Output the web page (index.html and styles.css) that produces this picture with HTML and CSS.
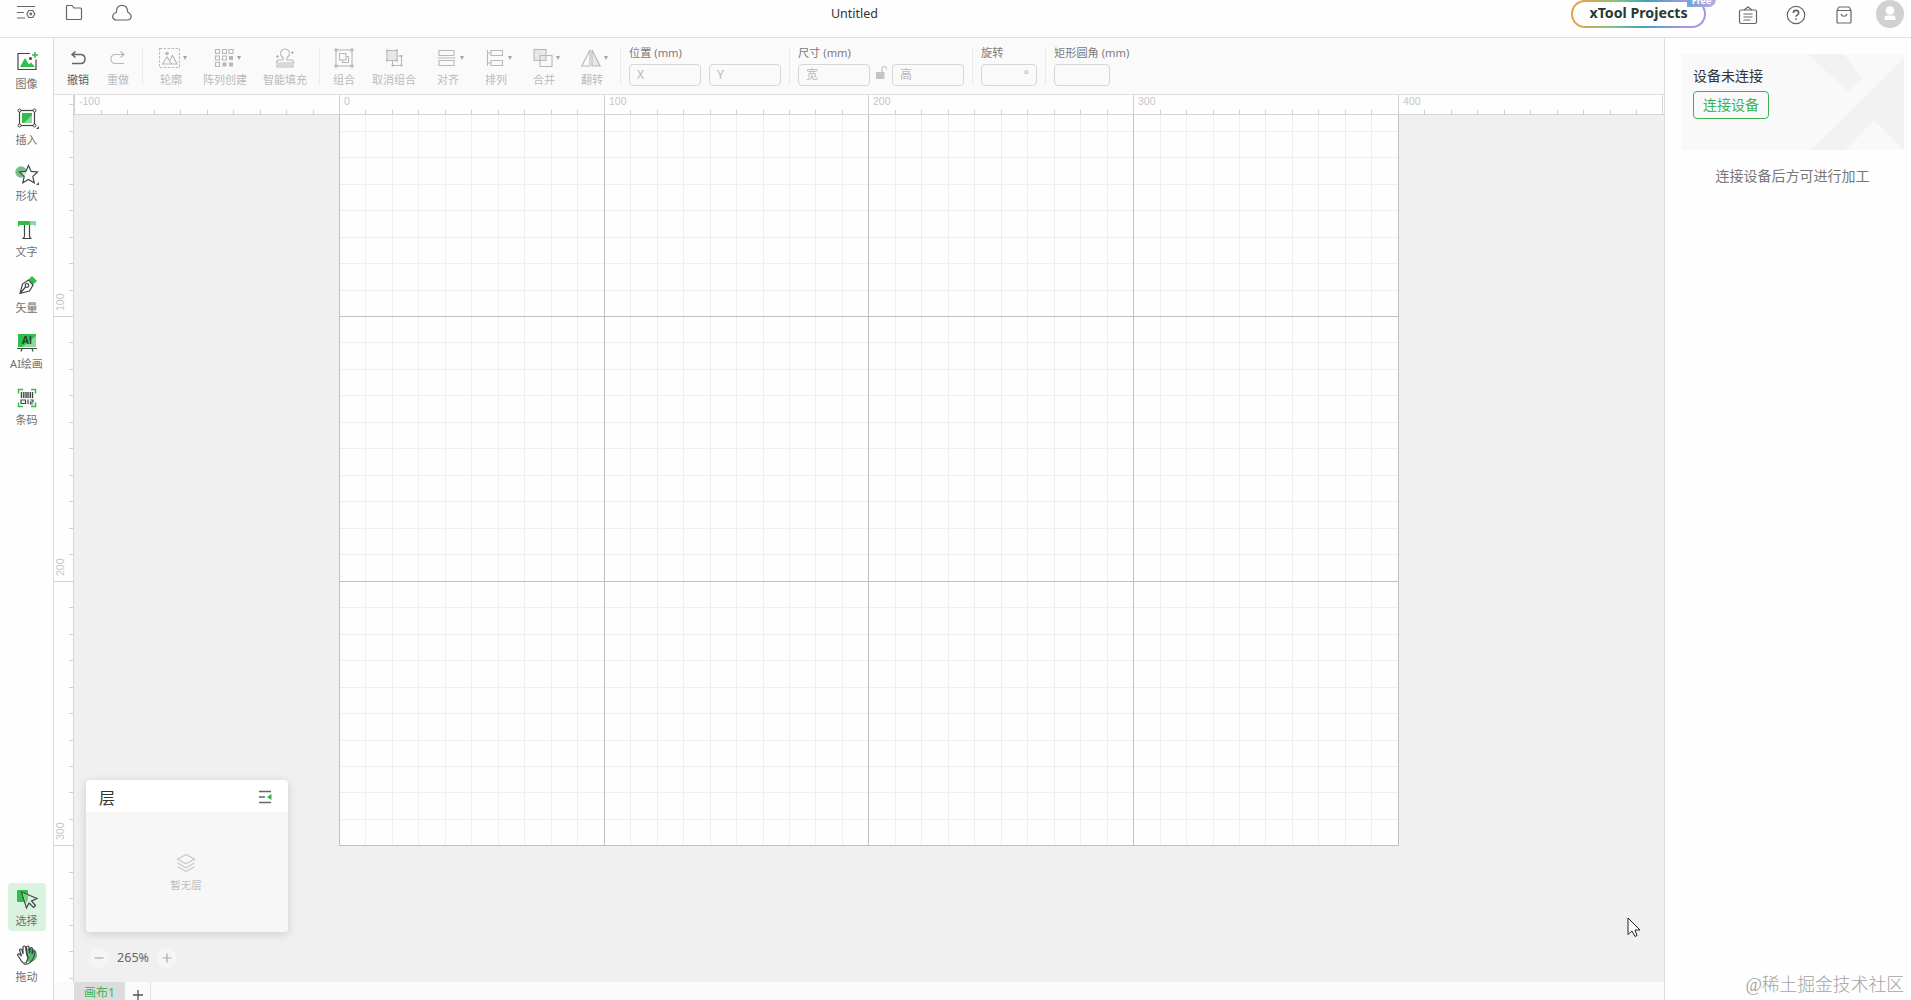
FILE: index.html
```html
<!DOCTYPE html>
<html lang="zh-CN">
    <head>
        <title>Untitled</title>
        <meta charset="utf-8">
        <link rel="stylesheet" href="styles.css">
    </head>
    <body>
        <!-- 顶部栏 -->
        <div class="header">
            <div class="header-left">
                <svg class="icon-menu" width="20" height="16" viewBox="0 0 20 16"><path d="M1 1.500h18M1 7.500h7M1 13h8"/><path d="M12.800 4.500h4l2 3.500-2 3.500h-4l-2-3.500z" transform="translate(0 1)"/><circle cx="14.800" cy="9" r=".8"/></svg>
                <svg class="icon-folder" width="18" height="18" viewBox="0 0 18 18"><path d="M2.500 1.500h4.500l2 2.500h6.500q1 0 1 1v9.500q0 1-1 1h-13q-1 0-1-1v-12q0-1 1-1z"/></svg>
                <svg class="icon-cloud" width="20" height="18" viewBox="0 0 20 18"><path d="M4.500 16c-4.500 0-5-5.500-1.500-7 1 0 1.500-1 1.500-2 .5-7.500 10.500-7.500 11 0 0 1 .5 1.500 1.500 2 3.500 2 2.500 7-1.500 7z"/></svg>
            </div>
            <div class="title">Untitled</div>
            <div class="header-right">
                <div class="projects">xTool Projects<span class="free">Free</span></div>
                <svg class="icon-list" width="20" height="20" viewBox="0 0 20 20"><rect x="1.500" y="5" width="17" height="13.500" rx="1.500"/><path d="M5.500 9h9M5.500 12h9M5.500 15h7M6 5l4-3 4 3"/></svg>
                <svg class="icon-help" width="20" height="20" viewBox="0 0 20 20"><circle cx="10" cy="10" r="8.700"/><path d="M7.300 8c0-3.500 5.400-3.500 5.400 0 0 1.800-2.700 1.800-2.700 3.800M10 13.200v1.600" stroke-width="1.600"/></svg>
                <svg class="icon-bag" width="18" height="20" viewBox="0 0 18 20"><path d="M2 5.500l2-3.500h10l2 3.500v11.500q0 1-1 1h-12q-1 0-1-1zM2 5.500h14M6 9c1 3 5 3 6 0"/></svg>
                <svg class="avatar" width="28" height="28" viewBox="0 0 28 28"><circle cx="14" cy="14" r="14"/><circle class="face" cx="14" cy="10.500" r="4.300"/><path class="face" d="M8.500 20v-1.500q0-3 3-3h5q3 0 3 3v1.500z"/></svg>
            </div>
        </div>
        <div class="main">
            <!-- 左侧工具 -->
            <div class="rail">
                <div class="rail-item">
                    <svg width="24" height="22" viewBox="0 0 24 22"><path class="line" d="M15 2.500h-12v16h18v-10"/><path class="green" d="M5 16l5-9 4 6.500 2-2 4 4.500z"/><path class="green-line" d="M20 1v6M17 4h6"/><circle class="dark" cx="15.500" cy="7.500" r="1.500"/></svg>
                    <span>图像</span>
                </div>
                <div class="rail-item more">
                    <svg width="24" height="22" viewBox="0 0 24 22"><rect class="green" x="7" y="6" width="10" height="10"/><path class="pale" d="M17 8v8h-8z"/><rect class="line" x="4.500" y="3.500" width="15" height="15"/><g class="node"><circle cx="4.500" cy="3.500" r="1.500"/><circle cx="19.500" cy="3.500" r="1.500"/><circle cx="4.500" cy="18.500" r="1.500"/><circle cx="19.500" cy="18.500" r="1.500"/></g></svg>
                    <span>插入</span>
                </div>
                <div class="rail-item more">
                    <svg width="24" height="22" viewBox="0 0 24 22"><circle cx="6" cy="9" r="5.700" fill="#75bf87"/><path class="line" fill="#fff" fill-opacity=".7" d="M13.500 2.500l2.700 5.900 6.300.6-4.700 4.400 1.400 6.300-5.700-3.300-5.700 3.300 1.400-6.300-4.700-4.400 6.300-.6z"/></svg>
                    <span>形状</span>
                </div>
                <div class="rail-item">
                    <svg width="24" height="22" viewBox="0 0 24 22"><path class="green" d="M3 2h13v4h-11l-2 2z"/><path class="pale" d="M15 2h6v5.500l-2-1.500h-4z"/><path class="line" fill="#fff" d="M9.500 6v11q0 2-2 2.500h9q-2-.5-2-2.500v-11"/></svg>
                    <span>文字</span>
                </div>
                <div class="rail-item">
                    <svg width="24" height="22" viewBox="0 0 24 22"><path class="green" d="M13.500 4.500l3.500-3.500 5 5-4 3.500z"/><path class="line" d="M5 18.500l2.500-9.500 6-4 4.500 5-3.500 6zM5 18.500l6-7"/><circle class="line" cx="12" cy="10.500" r="1.800" fill="#fff"/></svg>
                    <span>矢量</span>
                </div>
                <div class="rail-item">
                    <svg width="24" height="22" viewBox="0 0 24 22"><rect class="green" x="3" y="3" width="18" height="13"/><path class="pale" d="M21 5v11h-14z"/><text x="12" y="13" text-anchor="middle" class="ai">AI</text><path class="line" d="M2 17.500h20M7 17.500l-1 3M17 17.500l1 3"/></svg>
                    <span>AI绘画</span>
                </div>
                <div class="rail-item">
                    <svg width="24" height="22" viewBox="0 0 24 22"><path class="green-line" d="M3.500 6.500v-4h4.500M16 2.500h4.500v4M3.500 15.500v4h4.500M16 19.500h4.500v-4"/><path class="code" d="M6.500 5v6M8.800 5v6M11 5v6M13 5v6M15.300 5v6M17.500 5v6"/><path class="line" d="M6 13h4.500v3.500h-4.500zM13 12.500v4.500M15.500 13h2.500v2h-2.500v2h2.500"/></svg>
                    <span>条码</span>
                </div>
                <div class="rail-space"></div>
                <div class="rail-item active">
                    <svg width="24" height="22" viewBox="0 0 24 22"><rect class="green" x="2" y="2" width="11" height="12" rx="1"/><path class="line" fill="#d9f3df" d="M6.500 4l15.500 6.500-5.500 2.500 4 4.500-2 2-4.500-4.500-2.500 5z"/><path d="M7.500 5l5.500 2.500v4l-1.500 3.500z" fill="#70cf84"/></svg>
                    <span>选择</span>
                </div>
                <div class="rail-item">
                    <svg width="24" height="22" viewBox="0 0 24 22"><circle cx="15" cy="11" r="7" fill="#58b86d"/><path class="line" fill="#fff" d="M8.500 19c-2-1-3-3-4-5l-2-3q.5-2 2.500-.5l1.500 1.500-2-6q1-2 2.500 0l1 4V3q1.500-2 2.500 0l1 6 1.500 5-2 5z"/><path class="line" d="M11.500 9V3q1.500-2 2.500 0l.5 6 1-5q2-1 2 1l-.500 5 1.500-3q2-.5 1.500 1.500-2 10-7.500 11.500-2 .5-4 0M11.500 9l1.500 5"/></svg>
                    <span>拖动</span>
                </div>
            </div>
            <div class="center">
                <!-- 工具栏 -->
                <div class="toolbar">
                    <div class="tool dark-tool"><div class="tool-icon"><svg width="20" height="20" viewBox="0 0 20 20"><path d="M7.500 3.500l-3.500 3 3.500 3M4 6.500h8.500q4.500 0 4.500 4.500t-4.500 4.500h-8.500" stroke-width="1.500"/></svg></div><span>撤销</span></div>
                    <div class="tool"><div class="tool-icon"><svg width="20" height="20" viewBox="0 0 20 20"><path d="M12.500 3.500l3.500 3-3.500 3M16 6.500h-8.500q-4.500 0-4.500 4.500t4.500 4.500h8.500"/></svg></div><span>重做</span></div>
                    <i class="divider"></i>
                    <div class="tool drop"><div class="tool-icon"><svg width="21" height="20" viewBox="0 0 21 20"><rect x=".5" y=".5" width="20" height="19" stroke-dasharray="2.500 1.500"/><path d="M3.500 16l4.500-7 4.500 7zM11 12l2.500-4.500 4.500 8.500h-5"/><circle class="fill" cx="8" cy="5.500" r="1.800"/></svg></div><span>轮廓</span></div>
                    <div class="tool wide drop"><div class="tool-icon"><svg width="20" height="20" viewBox="0 0 20 20"><path d="M1.500 1.500h4v4h-4zM8.500 1.500h4v4h-4zM15 1.500h4v4h-4zM1.500 8h4v4h-4zM8.500 8h4v4h-4zM1.500 14.500h4v4h-4z"/><path class="fill" d="M15 8h4v4h-4zM8.500 14.500h4v4h-4zM15 14.500h4v4h-4z"/></svg></div><span>阵列创建</span></div>
                    <div class="tool wide"><div class="tool-icon"><svg width="20" height="20" viewBox="0 0 20 20"><path d="M8 12V9.500a4.500 4.500 0 1 1 4 0V12h4.500q2 0 2 3h-17q0-3 2-3zM2 17h16v2h-16zM2.500 7v3M1 8.500h3M17.500 3v3M16 4.500h3"/></svg></div><span>智能填充</span></div>
                    <i class="divider"></i>
                    <div class="tool"><div class="tool-icon"><svg width="20" height="20" viewBox="0 0 20 20"><rect x="2" y="2" width="16" height="16"/><rect x="5.500" y="5.500" width="6.500" height="6.500"/><path d="M12 8.500h2.500v6h-6V12"/><path class="fill" d="M.5.5h3v3h-3zM16.500.5h3v3h-3zM.5 16.500h3v3h-3zM16.500 16.500h3v3h-3z"/></svg></div><span>组合</span></div>
                    <div class="tool wide"><div class="tool-icon"><svg width="20" height="20" viewBox="0 0 20 20"><rect class="soft" x="3" y="2.500" width="10" height="10"/><path d="M13 8h4.500v9.500H8.500V13"/><path class="fill" d="M2 1.500h2v2h-2zM12 1.500h2v2h-2zM2 11.500h2v2h-2zM12 11.500h2v2h-2zM16.500 7h2v2h-2zM16.500 16.500h2v2h-2zM7.500 16.500h2v2h-2z"/></svg></div><span>取消组合</span></div>
                    <div class="tool drop"><div class="tool-icon"><svg width="20" height="20" viewBox="0 0 20 20"><path d="M2 2.500h15v5h-15zM.5 10h18M2 12.500h15v5h-15z"/></svg></div><span>对齐</span></div>
                    <div class="tool drop"><div class="tool-icon"><svg width="20" height="20" viewBox="0 0 20 20"><path d="M6 2.500h11.500v5h-11.500zM6 12.500h11.500v5h-11.500zM2.500 2v16M2.500 5h3.500M2.500 15h3.500"/></svg></div><span>排列</span></div>
                    <div class="tool drop"><div class="tool-icon"><svg width="20" height="20" viewBox="0 0 20 20"><rect class="soft" x="1" y="1.500" width="12" height="11"/><rect x="7" y="7.500" width="12" height="11"/></svg></div><span>合并</span></div>
                    <div class="tool drop"><div class="tool-icon"><svg width="20" height="20" viewBox="0 0 20 20"><path d="M9 2v16H.8z"/><path class="soft" d="M11 2v16h8.200z"/></svg></div><span>翻转</span></div>
                    <i class="divider"></i>
                    <div class="field"><label>位置 (mm)</label><div class="inputs pos"><div class="input">X</div><div class="input">Y</div></div></div>
                    <i class="divider"></i>
                    <div class="field"><label>尺寸 (mm)</label><div class="inputs"><div class="input">宽</div><svg class="lock" width="22" height="22" viewBox="0 0 22 22"><path d="M6 8h8.500v7H6z"/><path class="lock-bar" d="M12 8V5q0-2.500 2.300-2.500t2.200 3"/></svg><div class="input">高</div></div></div>
                    <i class="divider"></i>
                    <div class="field"><label>旋转</label><div class="inputs"><div class="input small deg">°</div></div></div>
                    <i class="divider"></i>
                    <div class="field"><label>矩形圆角 (mm)</label><div class="inputs"><div class="input small"></div></div></div>
                </div>
                <!-- 标尺 + 画布 -->
                <div class="stage">
                    <svg id="board" width="1611" height="887"></svg>
                    <div class="layers">
                        <div class="layers-head"><span>层</span><svg width="14" height="14" viewBox="0 0 14 14"><path d="M1 1.500h12M1 7h6M1 12.500h12" stroke="#666" stroke-width="1.500"/><path d="M13.500 4v6l-4.500-3z" fill="#2bb547"/></svg></div>
                        <div class="layers-body">
                            <svg width="20" height="20" viewBox="0 0 20 20"><path d="M10 1.500l8.500 4.700-8.500 4.700-8.500-4.700zM1.500 10l8.500 4.700 8.500-4.700M1.500 13.800l8.500 4.700 8.500-4.700"/></svg>
                            <span>暂无层</span>
                        </div>
                    </div>
                    <div class="zoom">
                        <svg width="20" height="20" viewBox="0 0 20 20"><circle cx="10" cy="10" r="10"/><path d="M5.500 10h9"/></svg>
                        <span>265%</span>
                        <svg width="20" height="20" viewBox="0 0 20 20"><circle cx="10" cy="10" r="10"/><path d="M5.500 10h9M10 5.500v9"/></svg>
                    </div>
                    <svg class="cursor" width="14" height="21" viewBox="0 0 14 21"><path d="M1 1v16.500l4-3.500 3 5.500 2-1-2-5.500h5z" fill="#fff" stroke="#222"/></svg>
                </div>
                <div class="tabs">
                    <div class="tab">画布1</div>
                    <div class="tab-add"><svg width="10" height="10" viewBox="0 0 10 10"><path d="M0 5h10M5 0v10" stroke="#555" stroke-width="1.300"/></svg></div>
                </div>
            </div>
            <!-- 右侧设备面板 -->
            <div class="panel">
                <div class="device">
                    <svg class="device-bg" width="96" height="96" viewBox="0 0 96 96"><path d="M0 0h36l18 25-14 13zM96 4v92L66 66 37 96H3z"/></svg>
                    <p>设备未连接</p>
                    <div class="connect">连接设备</div>
                </div>
                <div class="tip">连接设备后方可进行加工</div>
                <div class="mark">@稀土掘金技术社区</div>
            </div>
        </div>
        <script src="board.js"></script>
    </body>
</html>
```
FILE: styles.css
```css
* {
    margin: 0;
    padding: 0;
    box-sizing: border-box;
}
body {
    height: 1000px;
    display: flex;
    flex-direction: column;
    overflow: hidden;
    background-color: #fefefe;
    color: #333;
    font-family: "Noto Sans", "Noto Sans CJK SC", sans-serif;
}
svg {
    display: block;
    flex: none;
    fill: none;
}
/* 顶部 */
.header {
    height: 38px;
    flex: none;
    display: grid;
    grid-template-columns: 800px 109px 1fr;
    border-bottom: 1px solid #e0e0e0;
}
.header svg {
    stroke: #666;
    stroke-width: 1.2;
}
.header-left {
    display: flex;
    height: 26px;
    align-items: center;
    padding-left: 16px;
}
.icon-folder {
    margin-left: 29px;
}
.icon-cloud {
    margin-left: 29px;
}
.title {
    height: 27px;
    line-height: 27px;
    text-align: center;
    font-size: 12.5px;
}
.header-right {
    display: flex;
    justify-content: flex-end;
    align-items: flex-start;
    padding-right: 7px;
}
.projects {
    position: relative;
    width: 135px;
    height: 28px;
    line-height: 22px;
    border: 2px solid transparent;
    border-radius: 14px;
    background: linear-gradient(#fff, #fff) padding-box, linear-gradient(100deg, #e5a14e 8%, #86c57b 32%, #3fa3bf 55%, #a597e0 82%) border-box;
    text-align: center;
    font-size: 14.2px;
    font-weight: bold;
    color: #273a34;
}
.free {
    position: absolute;
    top: -10px;
    right: -12px;
    width: 29px;
    height: 15px;
    line-height: 17px;
    border-radius: 8px 8px 8px 0;
    background: linear-gradient(90deg, #68a8d8, #c9a5e0);
    color: #fff;
    font-size: 9px;
}
.header .icon-list {
    margin: 5px 0 0 32px;
}
.header .icon-help {
    margin: 5px 0 0 28px;
}
.header .icon-bag {
    margin: 5px 0 0 29px;
}
.header .avatar {
    margin-left: 23px;
    fill: #d1d1d1;
    stroke: none;
}
.header .face {
    fill: #fff;
}
.main {
    flex: 1;
    min-height: 0;
    display: flex;
}
/* 左侧 */
.rail {
    width: 54px;
    flex: none;
    display: flex;
    flex-direction: column;
    align-items: center;
    gap: 8px;
    padding: 8px 0 13px;
    border-right: 1px solid #dedede;
}
.rail-item {
    position: relative;
    width: 38px;
    height: 48px;
    padding-top: 5px;
    display: flex;
    flex-direction: column;
    align-items: center;
    border-radius: 4px;
    font-size: 11px;
    line-height: 16px;
    color: #707070;
    white-space: nowrap;
}
.rail-item span {
    margin-top: 3px;
}
.rail-space {
    flex: 1;
}
.rail-item.active {
    background-color: #d9f3df;
}
.rail-item.more::after {
    content: "";
    position: absolute;
    right: 7px;
    top: 24px;
    border-left: 3px solid transparent;
    border-bottom: 3px solid #555;
}
.line {
    stroke: #404745;
    stroke-width: 1.2;
}
.green {
    fill: #2fbf4b;
}
.pale {
    fill: #91d69e;
}
.green-line {
    stroke: #2fbf4b;
    stroke-width: 1.5;
}
.dark {
    fill: #404745;
}
.node {
    fill: #fff;
    stroke: #404745;
}
.code {
    stroke: #404745;
    stroke-width: 1.4;
}
.ai {
    fill: #26432c;
    font-family: "Open Sans", sans-serif;
    font-size: 10px;
    font-weight: bold;
}
/* 中间 */
.center {
    flex: 1;
    min-width: 0;
    display: flex;
    flex-direction: column;
}
.toolbar {
    height: 57px;
    flex: none;
    display: flex;
    padding-left: 4px;
    background-color: #fafafa;
    border-bottom: 1px solid #e0e0e0;
}
.tool {
    width: 40px;
    padding-top: 10px;
    display: flex;
    flex-direction: column;
    align-items: center;
    color: #bbb;
    font-size: 11px;
    line-height: 16px;
    white-space: nowrap;
}
.tool.drop {
    width: 48px;
}
.tool.wide {
    width: 60px;
}
.tool svg {
    stroke: #b8b8b8;
    stroke-width: 1.1;
}
.tool .fill {
    fill: #b8b8b8;
    stroke: none;
}
.tool .soft {
    fill: #e8e8e8;
}
.tool span {
    margin-top: 4px;
}
.dark-tool {
    color: #5c5c5c;
}
.dark-tool svg {
    stroke: #666;
}
.tool-icon {
    display: flex;
    align-items: center;
}
.drop .tool-icon {
    padding-left: 4px;
}
.drop .tool-icon::after {
    content: "";
    margin-left: 3px;
    border: 2.5px solid transparent;
    border-top: 4px solid #a5a5a5;
    border-bottom: 0;
}
.divider {
    width: 1px;
    height: 38px;
    margin: 9px 4px 0;
    background-color: #eaeaea;
}
.field {
    padding: 6px 4px 0;
    font-size: 11.200px;
}
.field label {
    display: block;
    height: 20px;
    line-height: 18px;
    color: #7a7a7a;
    white-space: nowrap;
}
.inputs {
    display: flex;
}
.pos {
    gap: 8px;
}
.input {
    width: 72px;
    height: 22px;
    line-height: 20px;
    padding-left: 7px;
    border: 1px solid #d6d6d6;
    border-radius: 4px;
    font-size: 12px;
    color: #b9b9b9;
}
.input.small {
    width: 56px;
}
.deg {
    padding: 0 7px;
    text-align: right;
}
.lock {
    fill: #c4c4c4;
}
.lock-bar {
    fill: none;
    stroke: #c4c4c4;
    stroke-width: 1.2;
}
.stage {
    position: relative;
    flex: 1;
    min-height: 0;
    overflow: hidden;
}
#board text {
    fill: #c6c6c6;
    font-family: "Liberation Sans", sans-serif;
    font-size: 10.5px;
}
.layers {
    position: absolute;
    left: 32px;
    bottom: 50px;
    width: 202px;
    height: 152px;
    border-radius: 4px;
    background-color: #fff;
    box-shadow: 0 2px 10px rgba(0, 0, 0, .15);
    overflow: hidden;
}
.layers-head {
    height: 32px;
    padding: 2px 16px 0 13px;
    display: flex;
    align-items: center;
    justify-content: space-between;
    font-size: 16px;
}
.layers-body {
    height: 120px;
    padding: 41px 2px 0 0;
    display: flex;
    flex-direction: column;
    align-items: center;
    background-color: #f7f7f7;
    color: #bebebe;
    font-size: 10.5px;
    line-height: 16px;
}
.layers-body svg {
    stroke: #c8c8c8;
    stroke-width: 1.2;
}
.layers-body span {
    margin-top: 4px;
}
.zoom {
    position: absolute;
    left: 35px;
    bottom: 14px;
    display: flex;
    align-items: center;
    width: 88px;
    justify-content: space-between;
    font-size: 12.5px;
    line-height: 20px;
    color: #666;
}
.zoom svg {
    fill: #f5f5f5;
}
.zoom path {
    stroke: #aaa;
    stroke-width: 1.2;
}
.cursor {
    position: absolute;
    left: 1573px;
    top: 822px;
}
.tabs {
    height: 18px;
    flex: none;
    display: flex;
    padding-left: 20px;
    background-color: #fafafa;
    overflow: hidden;
}
.tab {
    width: 51px;
    height: 18px;
    line-height: 22px;
    text-align: center;
    background-color: #dcdcdc;
    color: #3db356;
    font-size: 12px;
}
.tab-add {
    width: 26px;
    padding: 8px 0 0 8px;
    border-right: 1px solid #e5e5e5;
}
/* 右侧 */
.panel {
    width: 247px;
    flex: none;
    display: flex;
    flex-direction: column;
    border-left: 1px solid #dedede;
    padding: 16px 7px 4px 16px;
}
.device {
    position: relative;
    height: 96px;
    padding: 11px 12px;
    background-color: #f9f9f9;
    font-size: 14px;
}
.device p {
    line-height: 22px;
    color: #333;
}
.device-bg {
    position: absolute;
    right: 0;
    top: 0;
    fill: #f2f2f2;
}
.connect {
    width: 76px;
    height: 28px;
    margin-top: 4px;
    line-height: 26px;
    border: 1px solid #3db356;
    border-radius: 4px;
    text-align: center;
    color: #3db356;
}
.tip {
    margin-top: 15px;
    text-align: center;
    font-size: 14px;
    line-height: 22px;
    color: #777;
}
.mark {
    margin-top: auto;
    text-align: right;
    font-family: "Liberation Serif", "Noto Sans CJK SC", serif;
    font-size: 17.8px;
    font-weight: 300;
    line-height: 22px;
    color: #a3a3a3;
    white-space: nowrap;
}
```
FILE: board.js
```js
var board = document.getElementById('board');
var step = 26.47;//每10mm的像素
var x0 = 285.5;//0刻度横坐标
var y0 = -43.2;//0刻度纵坐标
var size = 20;//标尺宽度
var html = '';

function rect(x, y, w, h, color) {
    html += '<rect x="' + x + '" y="' + y + '" width="' + w + '" height="' + h + '" fill="' + color + '"/>';
}
function px(n, base) {
    return Math.floor(base + n * step);
}

rect(0, 0, 1611, 887, '#f0f0f0');
rect(px(0, x0), size, px(40, x0) - px(0, x0), px(30, y0) - size, '#fefefe');
//细网格
for (var i = 1; i < 40; i++) {
    rect(px(i, x0), size, 1, px(30, y0) - size, '#efefef');
}
for (var i = 3; i < 30; i++) {
    rect(px(0, x0), px(i, y0), px(40, x0) - px(0, x0), 1, '#efefef');
}
//粗网格
for (var i = 0; i <= 40; i += 10) {
    rect(px(i, x0), size, 1, px(30, y0) - size + 1, '#c0c0c0');
}
for (var i = 10; i <= 30; i += 10) {
    rect(px(0, x0), px(i, y0), px(40, x0) - px(0, x0), 1, '#c0c0c0');
}
//标尺
rect(0, 0, 1611, size, '#fefefe');
rect(0, 0, size, 887, '#fefefe');
rect(size, size - 1, 1591, 1, '#d6d6d6');
rect(size - 1, 0, 1, 887, '#d6d6d6');
for (var i = -10; i <= 49; i++) {
    var big = i % 10 === 0;
    rect(px(i, x0), big ? 0 : 15, 1, big ? 20 : 4, '#d0d0d0');
    if (big) {
        html += '<text x="' + (px(i, x0) + 5) + '" y="10">' + i * 10 + '</text>';
    }
}
for (var i = 2; i <= 35; i++) {
    var big = i % 10 === 0;
    rect(big ? 0 : 15, px(i, y0), big ? 20 : 4, 1, '#d0d0d0');
    if (big) {
        html += '<text transform="translate(10 ' + (px(i, y0) - 5) + ') rotate(-90)">' + i * 10 + '</text>';
    }
}
rect(1608, 0, 1, size, '#d6d6d6');
board.innerHTML = html;
```
